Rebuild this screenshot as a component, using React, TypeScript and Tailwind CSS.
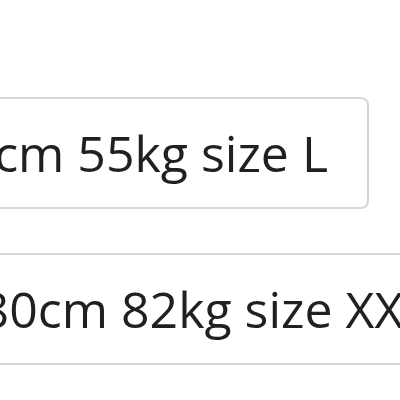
export default function App() {
    return (
        <div className="w-[400px] h-[400px] overflow-hidden bg-white font-['Open_Sans',sans-serif] text-[#1f1f24]">
            <div className="flex flex-col pt-[97px] gap-[44px]">
                {/* Top option */}
                <div className="ml-[-160px] w-[529px] h-[112px] shrink-0 flex items-center justify-end pr-[39px] border-2 border-[#d6d6d6] rounded-[8px]">
                    <span className="text-[50px] leading-none whitespace-nowrap">165cm 55kg size L</span>
                </div>

                {/* Bottom option */}
                <div className="ml-[-90px] w-[620px] h-[112px] shrink-0 flex items-center pl-[40px] border-2 border-[#d6d6d6] rounded-[8px]">
                    <span className="text-[50px] leading-none whitespace-nowrap">180cm 82kg size XXL</span>
                </div>
            </div>
        </div>
    );
}
